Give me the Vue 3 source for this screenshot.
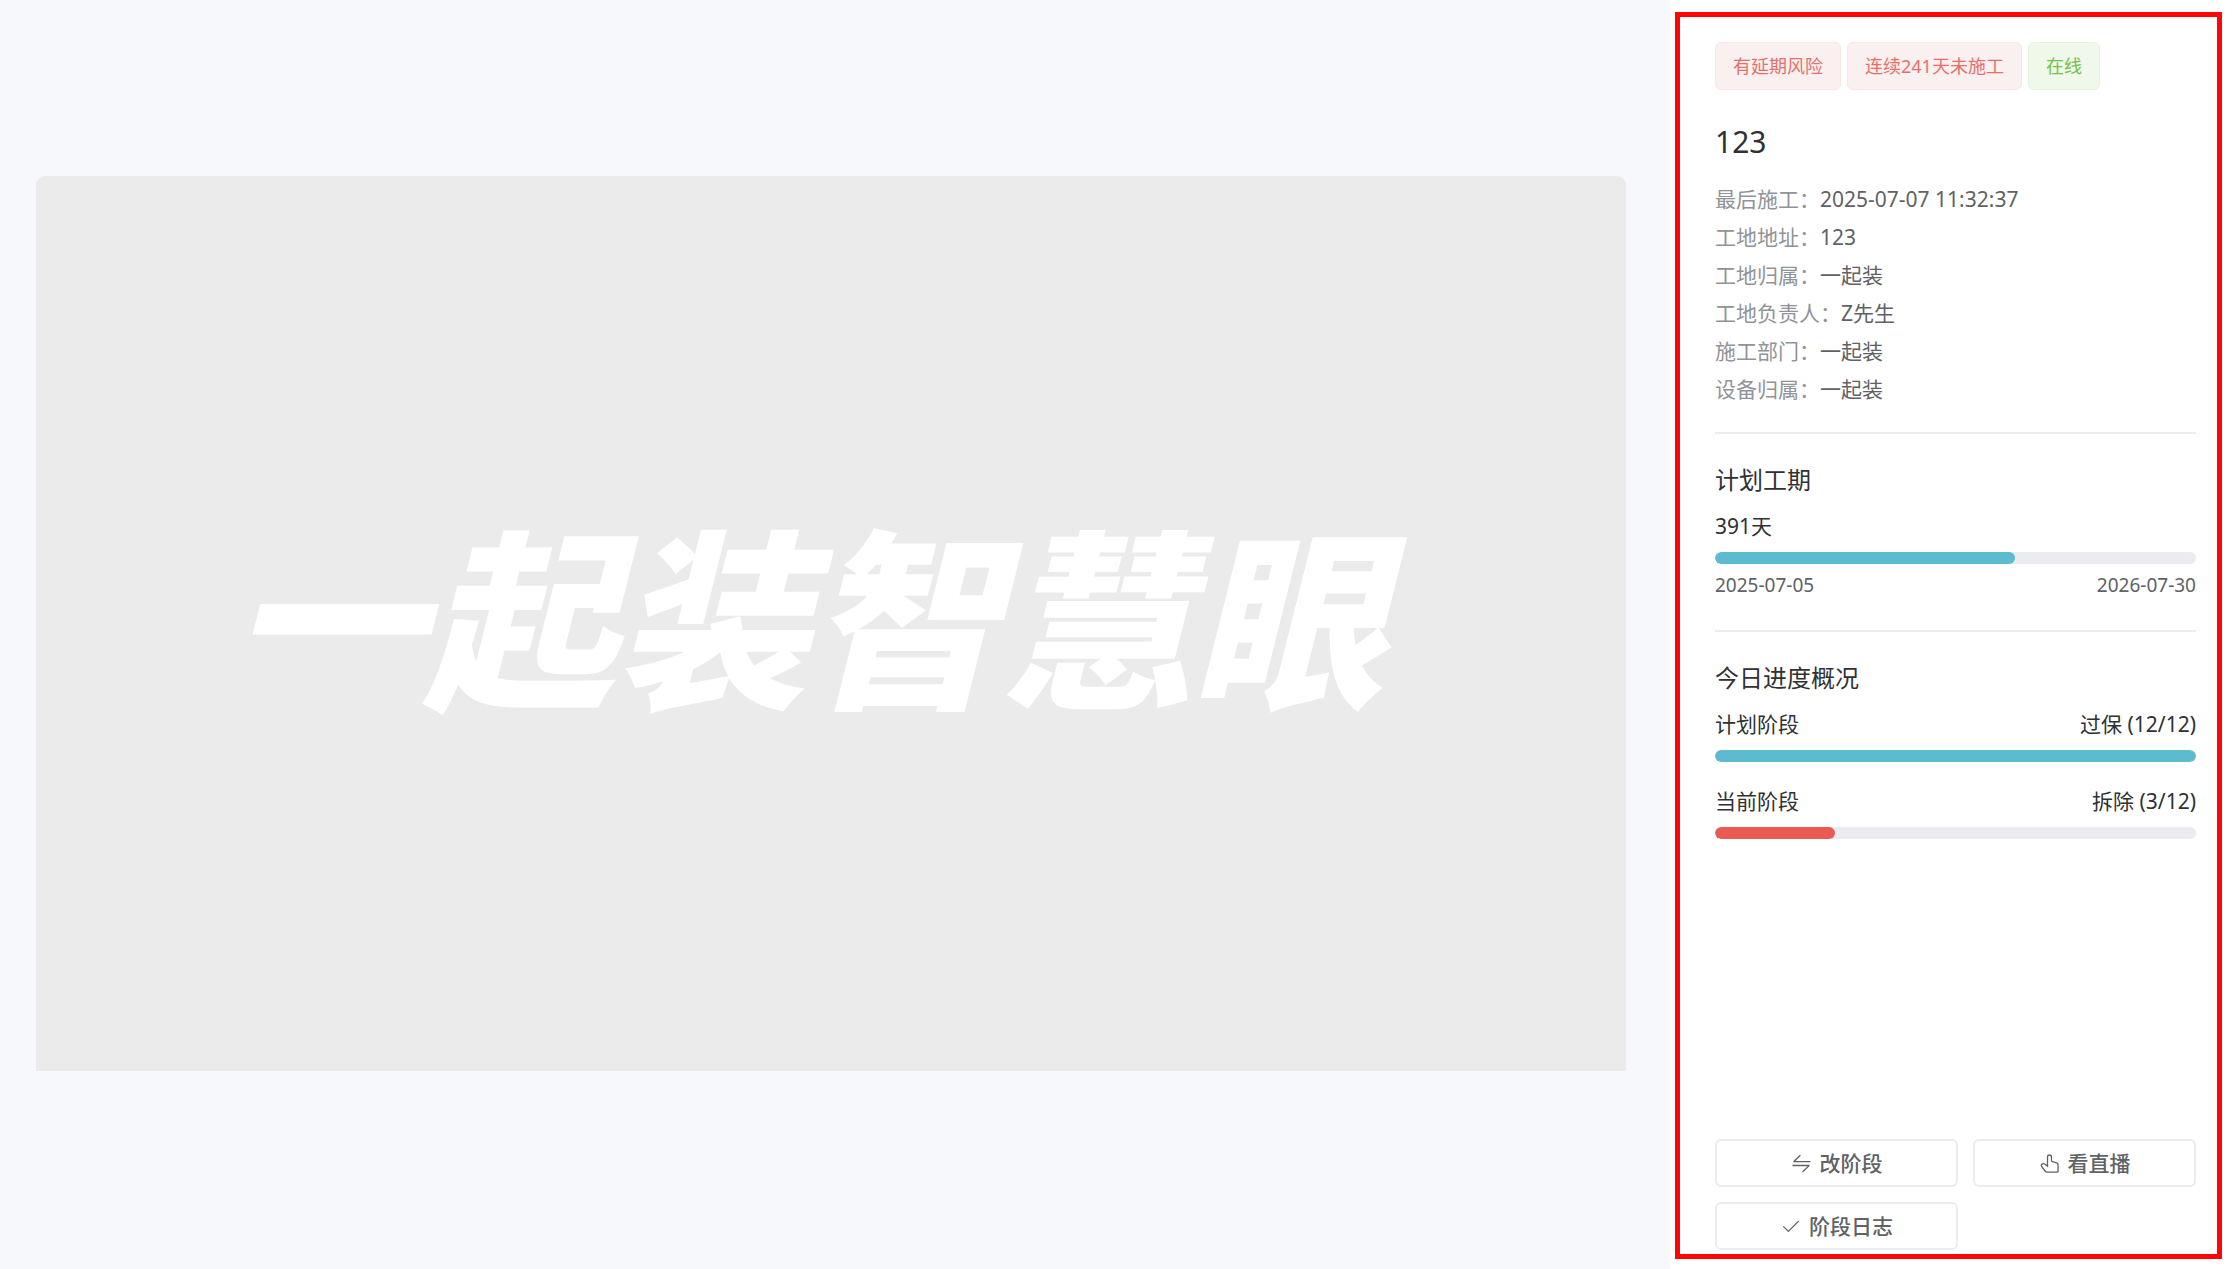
<script setup>
const tags = [
  { text: '有延期风险', type: 'danger' },
  { text: '连续241天未施工', type: 'danger' },
  { text: '在线', type: 'success' },
]

const details = [
  { label: '最后施工：', value: '2025-07-07 11:32:37' },
  { label: '工地地址：', value: '123' },
  { label: '工地归属：', value: '一起装' },
  { label: '工地负责人：', value: 'Z先生' },
  { label: '施工部门：', value: '一起装' },
  { label: '设备归属：', value: '一起装' },
]

const plan = { days: 391, start: '2025-07-05', end: '2026-07-30', percent: 62.4 }

const stages = [
  { name: '计划阶段', status: '过保 (12/12)', percent: 100, type: 'normal' },
  { name: '当前阶段', status: '拆除 (3/12)', percent: 25, type: 'late' },
]

const actions = [
  {
    text: '改阶段',
    icon: 'M118.656 438.656a32 32 0 0 1 0-45.248L416 96l4.48-3.776A32 32 0 0 1 461.248 96l3.712 4.48a32.064 32.064 0 0 1-3.712 40.832L218.56 384H928a32 32 0 1 1 0 64H141.248a32 32 0 0 1-22.592-9.344zM64 608a32 32 0 0 1 32-32h786.752a32 32 0 0 1 22.656 54.592L608 928l-4.48 3.776a32.064 32.064 0 0 1-40.832-49.024L805.632 640H96a32 32 0 0 1-32-32z',
  },
  {
    text: '看直播',
    icon: 'M511.552 128c-35.584 0-64.384 28.8-64.384 64.448v516.48L274.048 570.88a94.272 94.272 0 0 0-112.896-3.456 44.416 44.416 0 0 0-8.96 62.208L332.8 870.4A64 64 0 0 0 384 896h512V575.232a64 64 0 0 0-45.632-61.312l-205.952-61.76A96 96 0 0 1 576 360.192V192.448C576 156.8 547.2 128 511.552 128zM359.04 556.8l24.128 19.2V192.448a128.448 128.448 0 1 1 256.832 0v167.744a32 32 0 0 0 22.784 30.656l206.016 61.76A128 128 0 0 1 960 575.232V896a64 64 0 0 1-64 64H384a128 128 0 0 1-102.4-51.2L101.056 668.032A108.416 108.416 0 0 1 128 512.512a158.272 158.272 0 0 1 185.984 8.32z',
  },
  {
    text: '阶段日志',
    icon: 'M406.656 706.944 195.84 496.256a32 32 0 1 0-45.248 45.248l256 256 512-512a32 32 0 0 0-45.248-45.248L406.592 706.944z',
  },
]
</script>

<template>
  <div class="page">
    <main class="stage">
      <div class="player">
        <span class="wordmark">一起装智慧眼</span>
      </div>
    </main>

    <aside class="side">
      <div class="panel">
        <div class="tags">
          <span v-for="tag in tags" :key="tag.text" class="tag" :class="tag.type">{{ tag.text }}</span>
        </div>

        <h1 class="title">123</h1>

        <dl class="details">
          <div v-for="item in details" :key="item.label" class="detail">
            <dt>{{ item.label }}</dt>
            <dd>{{ item.value }}</dd>
          </div>
        </dl>

        <section class="block">
          <h2 class="heading">计划工期</h2>
          <div class="row">{{ plan.days }}天</div>
          <div class="track" role="progressbar" aria-label="计划工期" :aria-valuenow="plan.percent">
            <div class="fill normal" :style="{ width: plan.percent + '%' }"></div>
          </div>
          <div class="dates">
            <span>{{ plan.start }}</span>
            <span>{{ plan.end }}</span>
          </div>
        </section>

        <section class="block">
          <h2 class="heading">今日进度概况</h2>
          <div v-for="stage in stages" :key="stage.name" class="progress">
            <div class="row">
              <span>{{ stage.name }}</span>
              <span>{{ stage.status }}</span>
            </div>
            <div class="track" role="progressbar" :aria-label="stage.name" :aria-valuenow="stage.percent">
              <div class="fill" :class="stage.type" :style="{ width: stage.percent + '%' }"></div>
            </div>
          </div>
        </section>

        <div class="actions">
          <button v-for="action in actions" :key="action.text" type="button" class="action">
            <svg class="icon" viewBox="0 0 1024 1024" aria-hidden="true">
              <path :d="action.icon" fill="currentColor" />
            </svg>
            <span>{{ action.text }}</span>
          </button>
        </div>
      </div>
    </aside>
  </div>
</template>

<style>
body {
  margin: 0;
}
</style>

<style scoped>
.page {
  display: flex;
  min-height: 100vh;
  box-sizing: border-box;
  background: #fff;
  color: #303133;
  font-family: "Noto Sans", "Noto Sans CJK SC", sans-serif;
  font-size: 21px;
  line-height: 38px;
}

.stage {
  flex: 1;
  min-width: 0;
  box-sizing: border-box;
  display: flex;
  align-items: center;
  padding: 0 44px 22px 36px;
  background: #f6f8fb;
}

.player {
  width: 100%;
  box-sizing: border-box;
  aspect-ratio: 16 / 9;
  display: flex;
  align-items: center;
  justify-content: center;
  padding: 0 48px 28px 0;
  border-radius: 9px 9px 0 0;
  background: #ebebeb;
}

.wordmark {
  color: #fff;
  font-family: "Noto Sans CJK SC", sans-serif;
  font-size: 192px;
  font-style: italic;
  font-weight: 900;
  line-height: 1;
  white-space: nowrap;
}

.side {
  flex: none;
  width: 562px;
  box-sizing: border-box;
  display: flex;
  padding: 12px 10px 10px 5px;
}

.panel {
  flex: 1;
  min-width: 0;
  box-sizing: border-box;
  display: flex;
  flex-direction: column;
  padding: 25px 21px 4px 35px;
  border: 5px solid #ff0505;
}

.tags {
  display: flex;
  flex-wrap: wrap;
  gap: 6px;
}

.tag {
  padding: 0 17px;
  border: 1px solid;
  border-radius: 6px;
  font-size: 18px;
  line-height: 46px;
}

.danger {
  color: #e5706b;
  background: #fbf0f0;
  border-color: #fbe5e5;
}

.success {
  color: #73c248;
  background: #f0f8eb;
  border-color: #e4f4db;
}

.title {
  margin: 30px 0 16px;
  font-size: 30px;
  font-weight: 400;
  line-height: 44px;
}

.details {
  margin: 0 0 24px;
}

.detail {
  display: flex;
}

.detail dt {
  color: #909399;
}

.detail dd {
  margin: 0;
  color: #606266;
}

.block {
  padding: 27px 0 26px;
  border-top: 2px solid #ebecf2;
}

.heading {
  margin: 0 0 8px;
  font-size: 24px;
  font-weight: 400;
  line-height: 38px;
}

.row,
.dates {
  display: flex;
  justify-content: space-between;
}

.track {
  height: 12px;
  margin-top: 7px;
  border-radius: 6px;
  background: #ebecf2;
  overflow: hidden;
}

.fill {
  height: 100%;
  border-radius: 6px;
}

.normal {
  background: #5dbbcf;
}

.late {
  background: #e95b52;
}

.dates {
  margin-top: 2px;
  color: #606266;
  font-size: 19px;
}

.progress + .progress {
  margin-top: 20px;
}

.actions {
  display: grid;
  grid-template-columns: 12fr 11fr;
  gap: 15px;
  margin-top: auto;
}

.action {
  display: flex;
  align-items: center;
  justify-content: center;
  gap: 8px;
  height: 48px;
  padding: 0;
  border: 2px solid #ebecf2;
  border-radius: 6px;
  background: #fff;
  color: #606266;
  font: inherit;
  font-weight: 500;
  cursor: pointer;
}

.icon {
  width: 21px;
  height: 21px;
}
</style>
